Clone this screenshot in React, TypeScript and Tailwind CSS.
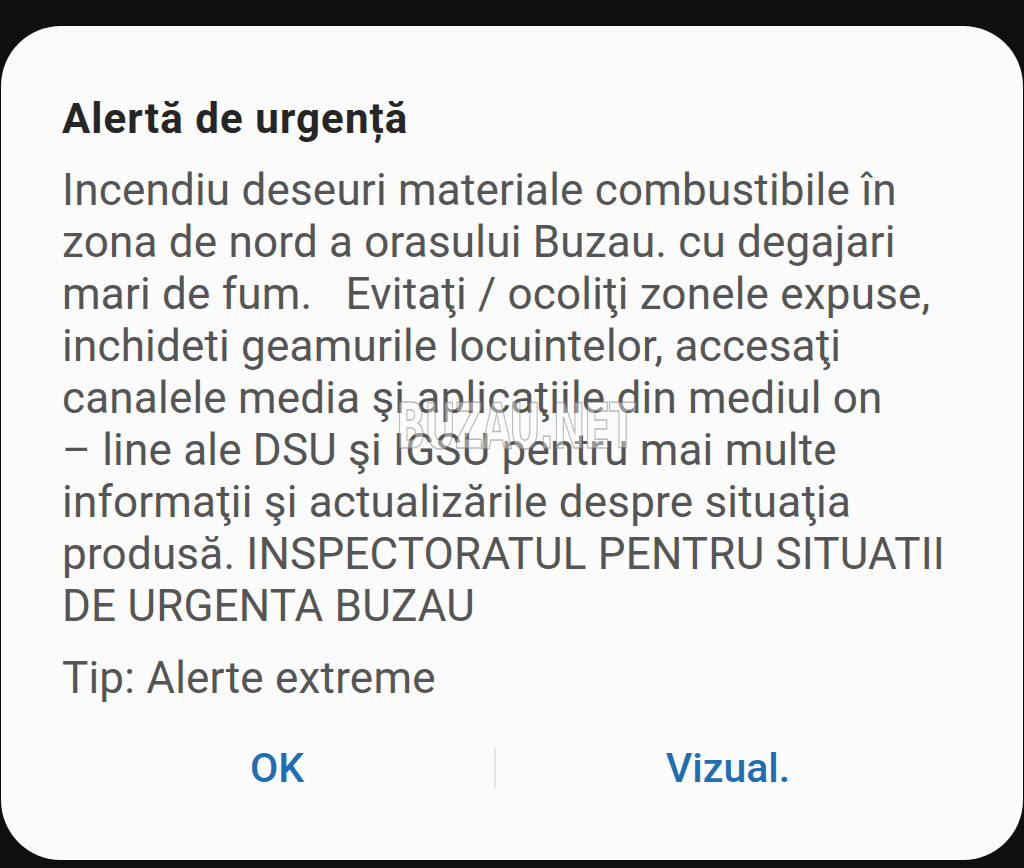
const bodyLines = [
  'Incendiu deseuri materiale combustibile în',
  'zona de nord a orasului Buzau. cu degajari',
  'mari de fum.   Evitaţi / ocoliţi zonele expuse,',
  'inchideti geamurile locuintelor, accesaţi',
  'canalele media şi aplicaţiile din mediul on',
  '– line ale DSU şi IGSU pentru mai multe',
  'informaţii şi actualizările despre situaţia',
  'produsă. INSPECTORATUL PENTRU SITUATII',
  'DE URGENTA BUZAU',
]

export default function App() {
  return (
    <div className="w-[1024px] h-[868px] bg-[#0f0f0f] pt-[26px] px-[1px] font-['Roboto','Noto_Sans',sans-serif]">
      <div className="relative h-[834px] rounded-[60px] bg-[#fbfbfb] pt-[67px]">
        <div className="px-[61px]">
          <h1 className="text-[42px] leading-[52px] font-bold text-[#262626] tracking-[1.1px]">
            Alertă de urgență
          </h1>

          <div className="mt-[19px] text-[44px] leading-[52px] text-[#555555] tracking-[0.2px]">
            {bodyLines.map((line, i) => (
              <p key={i} className="whitespace-pre">
                {line}
              </p>
            ))}
          </div>

          <p className="mt-[20px] text-[44px] leading-[52px] text-[#555555] tracking-[0.2px]">
            Tip: Alerte extreme
          </p>
        </div>

        <div className="mt-[38px] flex items-center pl-[59px]">
          <button className="w-[434px] text-center text-[41px] leading-[52px] font-medium text-[#1f6db3]">
            OK
          </button>
          <div className="h-[40px] w-[2px] bg-[#e6e6e6]" />
          <button className="w-[464px] text-center text-[41px] leading-[52px] font-medium text-[#1f6db3]">
            Vizual.
          </button>
        </div>

        {/* watermark */}
        <div className="absolute left-[395px] top-[370px] text-[62px] leading-[62px] font-bold font-['DejaVu_Sans_Condensed','Liberation_Sans_Narrow',sans-serif] tracking-[-2px] text-white/40 [-webkit-text-stroke:1.5px_rgba(120,120,120,0.5)] scale-x-[0.7] origin-left">
          BUZAU.NET
        </div>
      </div>
    </div>
  )
}
